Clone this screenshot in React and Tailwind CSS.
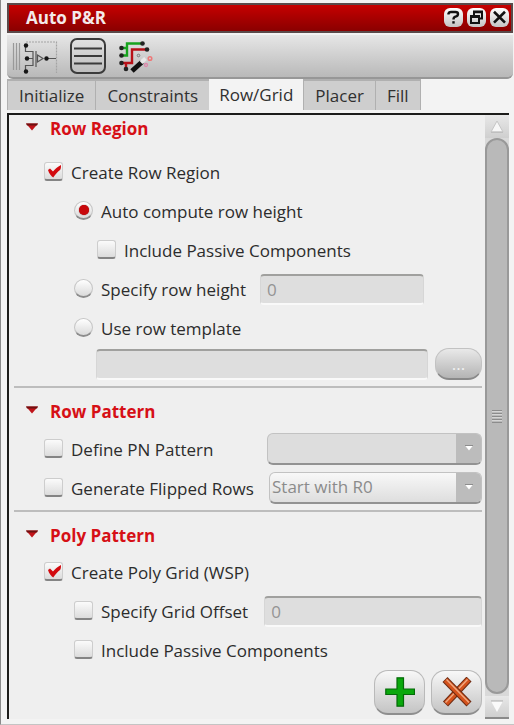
import React from "react";

function CheckRow({ id, label, checked, indent, children }) {
  return (
    <div className={`flex h-[39px] items-center gap-2 ${indent}`}>
      <span className="mb-[3px] grid h-[19px] w-[19px] shrink-0">
        <input
          id={id}
          type="checkbox"
          defaultChecked={checked}
          className="peer col-start-1 row-start-1 h-[19px] w-[19px] appearance-none rounded-[3px] border border-[#cdcdcd] border-b-2 border-b-[#848484] bg-linear-to-b from-[#fbfbfb] to-[#dcdcdc]"
        />
        <svg
          viewBox="0 0 19 19"
          className="pointer-events-none invisible col-start-1 row-start-1 h-[19px] w-[19px] peer-checked:visible"
        >
          <path d="M4 8 L6 6.5 L9 9.5 C11 7 13.500 5 17 3 C17 6 16.800 7.200 16 8 C13.500 10 11 12.500 9.200 15.600 C7.200 14 5 11.500 4 8 Z" fill="#d20a0f" />
        </svg>
      </span>
      <label htmlFor={id} className="whitespace-nowrap">{label}</label>
      {children}
    </div>
  );
}

function RadioRow({ id, label, checked, children }) {
  return (
    <div className="flex h-[39px] items-center gap-2 pl-[60px]">
      <span className="mb-[3px] grid h-[19px] w-[19px] shrink-0 place-items-center">
        <input
          id={id}
          type="radio"
          name="row-height"
          defaultChecked={checked}
          className="peer col-start-1 row-start-1 h-[19px] w-[19px] appearance-none rounded-full border border-[#c6c6c6] border-b-2 border-b-[#8c8c8c] bg-linear-to-b from-white to-[#dadada]"
        />
        <span className="pointer-events-none invisible col-start-1 row-start-1 h-[10px] w-[10px] rounded-full bg-[#c8080c] shadow-[0_0_1px_#700] peer-checked:visible" />
      </span>
      <label htmlFor={id} className="whitespace-nowrap">{label}</label>
      {children}
    </div>
  );
}

function Heading({ children }) {
  return (
    <h2 className="flex h-7 items-center gap-3 pl-3 font-bold text-[#d60f16]">
      <svg viewBox="0 0 12 8" className="mb-1 h-2 w-3" aria-hidden="true">
        <path d="M0 0.5 H12 L6 7.5 Z" fill="#c0141a" />
        <path d="M0 0.5 H12 L11 2.5 H1 Z" fill="#6e1010" />
      </svg>
      {children}
    </h2>
  );
}

const FIELD =
  "h-[31px] min-w-0 rounded-[4px] border border-[#d6d6d6] border-t-2 border-t-[#a0a09e] border-b-2 border-b-[#f9f9f9] bg-[#dedede] px-[6px] text-[#949494]";

function Combo({ label, value, tone, width }) {
  return (
    <span className={`mb-[2px] ml-auto grid h-[32px] ${width} overflow-hidden rounded-[6px] border border-[#c2c2c2] border-b-2 border-b-[#929292] ${tone}`}>
      <select
        disabled
        aria-label={label}
        defaultValue={value}
        className="col-start-1 row-start-1 w-full appearance-none bg-transparent pl-[2px] pr-7 text-[#8b8b8b] opacity-100"
      >
        <option>{value}</option>
      </select>
      <span className="pointer-events-none col-start-1 row-start-1 flex w-[25px] items-center justify-center justify-self-end bg-[#bcbcbc]">
        <svg viewBox="0 0 8 6" className="h-[6px] w-2">
          <path d="M0 0.5 H8 L4 5.5 Z" fill="#fff" />
          <path d="M0 0.5 H8" stroke="#8d8d8d" />
        </svg>
      </span>
    </span>
  );
}

const TITLE_BUTTON =
  "flex h-[19px] w-[19px] items-center justify-center rounded-[6px] bg-linear-to-b from-white to-[#c4c4c4]";

function TitleBar() {
  return (
    <header className="flex h-[30px] items-center border-2 border-[#5a4a4a] bg-linear-to-b from-[#c60000] to-[#8a0000] pl-[17px] pr-[2px]">
      <h1 className="flex-1 font-bold text-[#f4eaea]">Auto P&amp;R</h1>
      <div className="mb-[2px] flex gap-1">
        <button className={TITLE_BUTTON} aria-label="Help">
          <svg viewBox="0 0 19 19" className="h-[19px] w-[19px]" fill="none" stroke="#111" strokeWidth="2.4">
            <path d="M4.5 6.5 V5.5 Q5 4 7 4 H11.5 Q14 4 14 6 Q14 8 11.5 8.6 Q9.5 9.2 9.5 11.5" />
            <path d="M9.5 13.2 V15.6" />
          </svg>
        </button>
        <button className={TITLE_BUTTON} aria-label="Restore">
          <svg viewBox="0 0 19 19" className="h-[19px] w-[19px]" fill="none" stroke="#111" strokeWidth="2">
            <path d="M7 7 V3.5 H15 V10.5 H12.5 M7 4.2 H15" />
            <path d="M4 8 H12 V15 H4 Z M4 9 H12" />
          </svg>
        </button>
        <button className={TITLE_BUTTON} aria-label="Close">
          <svg viewBox="0 0 19 19" className="h-[19px] w-[19px]" fill="none" stroke="#111" strokeWidth="2.6">
            <path d="M4 3.8 L15 14.6 M15 3.8 L4 14.6" />
          </svg>
        </button>
      </div>
    </header>
  );
}

function Toolbar() {
  return (
    <div className="mt-[2px] flex h-[44px] items-center gap-3 rounded-b-[6px] border-b-2 border-[#979797] bg-linear-to-b from-[#e6e6e6] to-[#b9b9b9] pl-[3px]">
      <button aria-label="Device">
        <svg viewBox="0 0 48 36" className="h-9 w-12" fill="none" strokeWidth="1.2">
          <path d="M3.500 5 V32 M6.500 5 V32 M9.500 5 V32" stroke="#999" />
          <path d="M16 4 H46.5 V35" stroke="#a4a4a4" strokeDasharray="2 1" />
          <path d="M15.5 9 V13.5 H23 V27.500 H15.5 V33 M16 20.500 H23 M26 13 V29 M36 20.500 H46" stroke="#555" />
          <path d="M27.500 17 L33 20.500 L27.500 24 Z" fill="#ccc" stroke="#555" />
          <g fill="#151515">
            <circle cx="16" cy="7.500" r="2.200" />
            <circle cx="17" cy="20.500" r="2.200" />
            <circle cx="16" cy="33.500" r="2.200" />
            <circle cx="36.500" cy="20.500" r="2.200" />
          </g>
        </svg>
      </button>
      <button aria-label="Rows">
        <svg viewBox="0 0 36 36" className="h-9 w-9" fill="none" stroke="#3b3b3b" strokeWidth="2">
          <rect x="1" y="1" width="34" height="34" rx="6" />
          <path d="M4 10.500 H32 M4 18 H32 M4 25.500 H32" />
        </svg>
      </button>
      <button aria-label="Route">
        <svg viewBox="0 0 36 36" className="h-9 w-9" fill="none" strokeWidth="2.400">
          <path d="M3 10 H9 V5.500 H24 M3 17.500 H9 V10" stroke="#17a31e" />
          <path d="M3 25 H14 V11.500 H28 M8 25 V31" stroke="#b81118" />
          <path d="M14 33 L24 24" stroke="#111" strokeWidth="5" />
          <path d="M23 24.500 L27.500 20.500" stroke="#e8e8e8" strokeWidth="4" />
          <g fill="#222">
            <circle cx="3.500" cy="10" r="2.300" />
            <circle cx="3.500" cy="17.500" r="2.300" />
            <circle cx="3.500" cy="25" r="2.300" />
            <circle cx="8" cy="31" r="2.300" />
            <circle cx="24.500" cy="5.500" r="2.300" />
            <circle cx="29" cy="11.500" r="2.300" />
          </g>
          <circle cx="20.500" cy="17.500" r="1.300" stroke="#777" strokeWidth="1" />
          <circle cx="32" cy="20.500" r="1.800" stroke="#e77" strokeWidth="1.500" />
          <circle cx="28" cy="27" r="1.500" stroke="#d8a" strokeWidth="1.300" />
        </svg>
      </button>
    </div>
  );
}

function Tabs() {
  const idle = "h-[31px] border-l border-t-2 border-[#b0b0b0] bg-[#cecece] px-[11px]";
  return (
    <nav role="tablist" className="flex h-[34px] items-start text-[#303030]">
      <button role="tab" aria-selected="false" className={idle}>Initialize</button>
      <button role="tab" aria-selected="false" className={idle}>Constraints</button>
      <button role="tab" aria-selected="true" className="h-[31px] bg-[#f3f3f3] px-[10px]">Row/Grid</button>
      <button role="tab" aria-selected="false" className={idle}>Placer</button>
      <button role="tab" aria-selected="false" className={`${idle} border-r`}>Fill</button>
    </nav>
  );
}

function ScrollBar() {
  const arrow = "flex h-[23px] w-full shrink-0 items-center justify-center bg-linear-to-b from-[#e8e8e8] to-[#cfcfcf]";
  return (
    <div className="flex w-6 shrink-0 flex-col bg-[#d9d9d9]">
      <button className={arrow} aria-label="Scroll up">
        <svg viewBox="0 0 14 13" className="h-[13px] w-[14px]">
          <path d="M7 1 L13 12 H1 Z" fill="#f7f7f7" />
          <path d="M1 12 H13" stroke="#aaa" />
          <path d="M1 12 L7 1 L13 12" fill="none" stroke="#c6c6c6" />
        </svg>
      </button>
      <div className="flex flex-1 items-center justify-center rounded-[12px] border-2 border-[#999] bg-[#b9b9b9]">
        <svg viewBox="0 0 10 15" className="h-[15px] w-[10px]">
          <path d="M0 1.500 H10 M0 4.500 H10 M0 7.500 H10 M0 10.500 H10 M0 13.500 H10" stroke="#8c8c8c" />
          <path d="M0 2.500 H10 M0 5.500 H10 M0 8.500 H10 M0 11.500 H10" stroke="#d5d5d5" />
        </svg>
      </div>
      <button className={`${arrow} mt-[2px] border-b-2 border-[#8a8a8a]`} aria-label="Scroll down">
        <svg viewBox="0 0 14 13" className="h-[13px] w-[14px]">
          <path d="M1 1 H13 L7 12 Z" fill="#fafafa" />
          <path d="M1 1 H13" stroke="#aaa" />
        </svg>
      </button>
    </div>
  );
}

const ROUND_BUTTON =
  "flex h-[45px] w-[51px] items-center justify-center rounded-[14px] border border-[#b9b9b9] border-b-2 border-b-[#8e8e8e] bg-linear-to-b from-[#f8f8f8] to-[#c4c4c4]";

export default function App() {
  return (
    <div className="flex min-h-screen flex-col border-b border-l border-b-[#c4c4c4] border-l-[#8a8a8a] bg-[#f3f3f3] pl-[6px] pr-[1px] pt-[3px] font-['Open_Sans','Noto_Sans',sans-serif] text-[17px] leading-6 text-[#2c2c2c]">
      <TitleBar />
      <Toolbar />
      <Tabs />
      <main className="mb-[5px] mr-1 flex flex-1 border-l-2 border-t-2 border-[#1c1c1a] bg-[#efefef]">
        <form className="min-w-0 flex-1 pl-[5px] pr-[3px]">
          <section className="border-b-2 border-[#bdbdbd] pb-[6px]">
            <Heading>Row Region</Heading>
            <div className="pt-[10px]">
              <CheckRow id="create-row" label="Create Row Region" checked indent="pl-[30px]" />
              <RadioRow id="auto-height" label="Auto compute row height" checked />
              <CheckRow id="passive-row" label="Include Passive Components" indent="pl-[83px]" />
              <RadioRow id="fixed-height" label="Specify row height">
                <input disabled aria-label="Row height" defaultValue="0" className={`${FIELD} ml-[6px] mr-[58px] w-0 flex-1`} />
              </RadioRow>
              <RadioRow id="template" label="Use row template" />
              <div className="flex items-center gap-[7px] pl-[82px]">
                <input disabled aria-label="Row template" className={`${FIELD} flex-1`} />
                <button
                  type="button"
                  aria-label="Browse template"
                  className="h-[32px] w-[47px] rounded-[14px] border border-[#c2c2c2] border-b-2 border-b-[#898989] bg-linear-to-b from-[#e9e9e9] to-[#b4b4b4] text-[#f2f2f2]"
                >
                  ...
                </button>
              </div>
            </div>
          </section>

          <section className="border-b-2 border-[#bdbdbd] pb-[2px] pt-[10px]">
            <Heading>Row Pattern</Heading>
            <div className="pt-1">
              <CheckRow id="pn" label="Define PN Pattern" indent="pl-[30px]">
                <Combo label="PN pattern" value="" tone="bg-[#dddddd]" width="w-[215px]" />
              </CheckRow>
              <CheckRow id="flip" label="Generate Flipped Rows" indent="pl-[30px]">
                <Combo label="Flipped row start" value="Start with R0" tone="bg-linear-to-b from-[#f8f8f8] to-[#dedede]" width="w-[213px]" />
              </CheckRow>
            </div>
          </section>

          <section className="pt-[10px]">
            <Heading>Poly Pattern</Heading>
            <div className="pt-[3px]">
              <CheckRow id="poly" label="Create Poly Grid (WSP)" checked indent="pl-[30px]" />
              <CheckRow id="offset" label="Specify Grid Offset" indent="pl-[60px]">
                <input disabled aria-label="Grid offset" defaultValue="0" className={`${FIELD} ml-2 w-0 flex-1`} />
              </CheckRow>
              <CheckRow id="passive-poly" label="Include Passive Components" indent="pl-[60px]" />
            </div>
          </section>

          <div className="flex justify-end gap-[6px]">
            <button type="button" aria-label="Apply" className={ROUND_BUTTON}>
              <svg viewBox="0 0 30 30" className="h-[30px] w-[30px]">
                <path d="M12 0.800 H18.500 V12 H29.500 V17.500 H18.500 V29.200 H12 V17.500 H0.800 V12 H12 Z" fill="#0aa80c" stroke="#046a08" strokeWidth="1.200" />
              </svg>
            </button>
            <button type="button" aria-label="Delete" className={ROUND_BUTTON}>
              <svg viewBox="0 0 30 30" className="h-[30px] w-[30px]">
                <path d="M27 2 L3.500 27" stroke="#6b2a12" strokeWidth="7" />
                <path d="M26.500 2.500 L4 26.500" stroke="#d4521c" strokeWidth="5" />
                <path d="M25.500 2.500 L3.500 25.500" stroke="#f0a982" strokeWidth="1.400" />
                <path d="M3 2.500 L27 27" stroke="#6b2a12" strokeWidth="7" />
                <path d="M3.500 3 L26.500 26.500" stroke="#d4521c" strokeWidth="5" />
                <path d="M4.500 2.500 L27 25.500" stroke="#f0a982" strokeWidth="1.400" />
              </svg>
            </button>
          </div>
        </form>
        <ScrollBar />
      </main>
    </div>
  );
}
